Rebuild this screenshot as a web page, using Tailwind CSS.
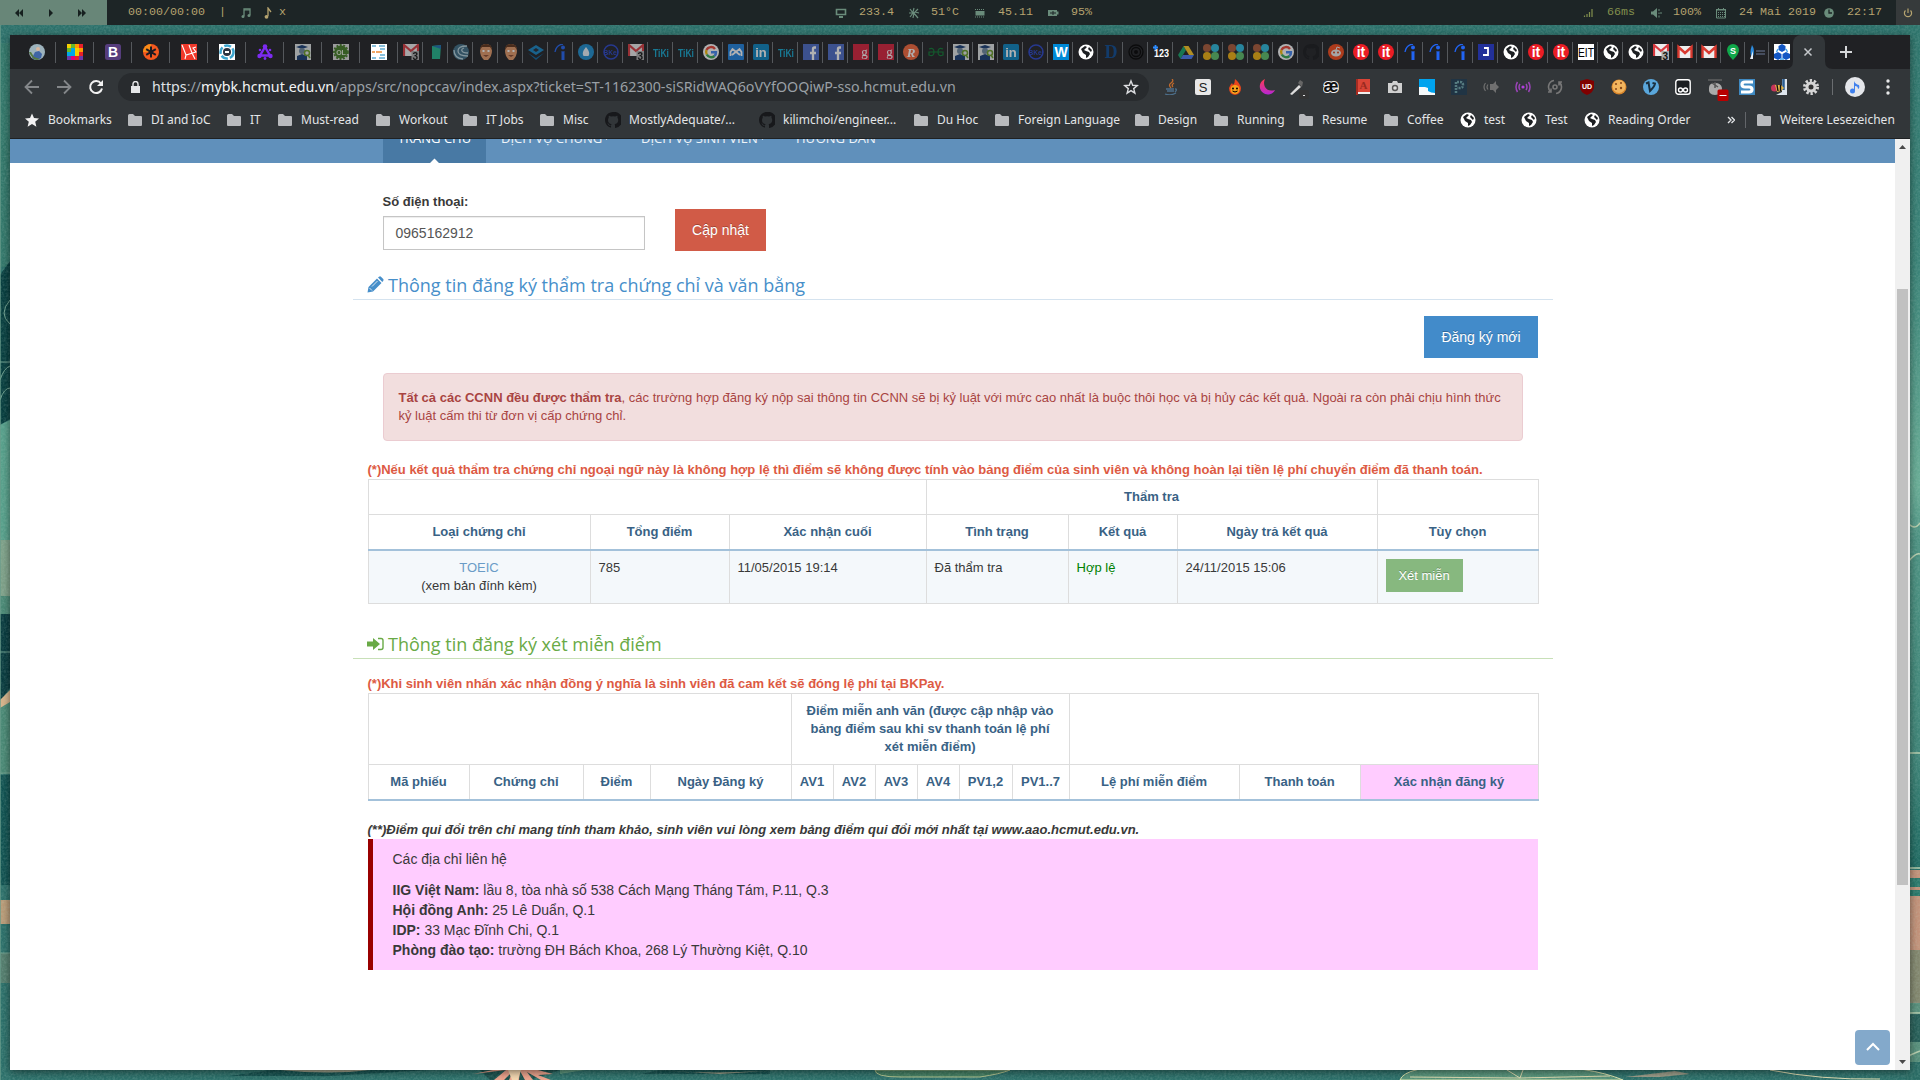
<!DOCTYPE html>
<html lang="vi">
<head>
<meta charset="utf-8">
<title>MyBK</title>
<script src="https://cdn.jsdelivr.net/npm/@tailwindcss/browser@4"></script>
</head>
<body class="relative h-[1080px] w-[1920px] overflow-hidden bg-[#2d716b]">

<!-- Desktop wallpaper -->
<svg class="absolute inset-0" width="1920" height="1080" viewBox="0 0 1920 1080">
  <defs>
    <filter id="grain" x="0" y="0" width="100%" height="100%"><feTurbulence type="fractalNoise" baseFrequency=".45" numOctaves="2" seed="4"/><feColorMatrix values="0 0 0 0 .6  0 0 0 0 .8  0 0 0 0 .72  .9 0 0 0 -.3"/></filter>
    <linearGradient id="wr" x1="0" y1="0" x2="0" y2="1"><stop offset="0" stop-color="#2d736b"/><stop offset=".25" stop-color="#3c8579"/><stop offset=".45" stop-color="#6aae97"/><stop offset=".5" stop-color="#4d9383"/><stop offset=".7" stop-color="#3f8578"/><stop offset=".8" stop-color="#1f6a62"/><stop offset="1" stop-color="#2b6d66"/></linearGradient>
    <linearGradient id="mg" x2="0" y2="1"><stop stop-color="#ff3d4f"/><stop offset="1" stop-color="#b526d6"/></linearGradient>
  </defs>
  <path fill="#2d716b" d="M0 0h1920v1080H0z"/>
  <path fill="url(#wr)" d="M1905 0h15v1080h-15z"/>
  <path fill="#c4937a" d="M1908 870h12v90h-12z"/><path fill="#2b7a6c" d="M1908 878h12v9h-12zM1908 890h12v6h-12z"/>
  <path fill="#84886f" d="M1908 950h12v54h-12z"/><path fill="#58907c" d="M1908 1003h12v10h-12zM1908 1042h12v20h-12z"/><path fill="#275f59" d="M1908 1014h12v28h-12z"/>
  <path fill="none" stroke="#b9cfae" stroke-width="1.500" d="M1908 523q7 8 12 0M1908 562q8-10 12-8M1908 1013h12M1908 1056l12-5M1908 753h12M1908 868h12"/>
  <path fill="#33786b" d="M0 43h10v224H0z"/><path fill="#083f40" d="M0 275l10-14v158l-10 6z"/>
  <path fill="#58a18c" d="M0 425l10-5v120H0z"/><path fill="#80a28a" d="M0 540h10v56H0z"/><path fill="#093c40" d="M0 612h10v76l-10 14z"/>
  <path fill="#4b8a76" d="M0 596h10v18H0zM0 700h10v74H0z"/><path fill="#d8b48b" d="M0 700l10-10v12l-10 6z"/><path fill="#125453" d="M0 775h10v110H0z"/><path fill="#bb9c78" d="M0 900h10v24H0z"/><path fill="#557f6f" d="M0 953h10v30H0z"/>
  <path fill="none" stroke="#6fa18f" d="M10 300q-12 14 0 24M0 362h10M0 380q4-12 10-14M0 400q4-12 10-12M0 652h10M0 773h10M0 953h10"/>
  <path fill="#155250" d="M270 1070h160l-100 6H230zM660 1070h110v4H640z"/>
  <path fill="#9c9d86" d="M280 1070h90q-40 5-90 0zM655 1070q60 5 125 0l-60 4z"/>
  <path fill="#5d977d" d="M560 1070h25l-25 4z"/><path fill="#1a504c" d="M480 1070h80l-30 10h-40z"/>
  <path fill="#efa18a" d="M473 1074l20-4h45l15 4-15 1 13 5h-10l-14-8 6 8h-8l-5-9-1 9h-10l4-9-9 9h-10l12-10z"/><path fill="#f8d8b0" d="M508 1070h13l-3 10h-6z"/>
  <path fill="#427e61" stroke="#b5c58f" d="M875 1070q0 7 25 7h80q20-3 30-7z"/>
  <path fill="#57957b" stroke="#dfe5af" d="M1400 1080q5-14 60-14h70q60 0 93 14z"/><path fill="none" stroke="#e2ddb0" d="M1507 1070l13 8 3-8M1520 1078l-110-1M1520 1078l90-2M1770 1070q50 10 110 9"/><path fill="#9b9a86" d="M1625 1077l50-6 15 3-30 3z"/>
  <path filter="url(#grain)" opacity=".35" d="M0 25h1920v1055H0z"/>
  <path fill="#6b9c8c" opacity=".7" d="M0 25h1v1055H0z"/>
</svg>

<svg class="hidden">
  <symbol id="avatar" viewBox="0 0 16 16"><circle cx="8" cy="8" r="8" fill="#9db3bd"/><path d="M3 14l3-6 4-1 3 3-1 4q-5 3-9 0z" fill="#3f65a5"/><path d="M0 8q3 7 8 8l3-1-6-2-3-5z" fill="#567a3f"/><circle cx="9" cy="5" r="2" fill="#d9b7a0"/></symbol>
  <symbol id="pixels" viewBox="0 0 16 16"><path fill="#f6d000" d="M0 0h16v16H0z"/><path fill="#ff9a00" d="M8 0h4v4H8zM12 4h4v4h-4z"/><path fill="#e8202a" d="M12 0h4v4h-4zM12 8h4v4h-4zM8 12h4v4H8z"/><path fill="#68b82a" d="M0 4h4v4H0zM4 0h4v4H4z"/><path fill="#00a8e8" d="M0 8h8v4H0zM4 4h4v4H4z"/><path fill="#6a3aa8" d="M0 12h4v4H0zM12 12h4v4h-4z"/><path fill="#e2007a" d="M4 12h4v4H4z"/></symbol>
  <symbol id="boot" viewBox="0 0 16 16"><rect width="16" height="16" rx="2.500" fill="#563d7c"/><text x="8" y="13" font-family="Liberation Sans" font-weight="700" font-size="14" text-anchor="middle" fill="#fff">B</text></symbol>
  <symbol id="aster" viewBox="0 0 16 16"><circle cx="8" cy="8" r="8" fill="#f4581f"/><path d="M8 0a8 8 0 0 0-8 8h8z" fill="#f98c18"/><path d="M8 2.500v11M3.200 5.200l9.600 5.600M12.800 5.200l-9.600 5.600" stroke="#1b1b22" stroke-width="2"/></symbol>
  <symbol id="laravel" viewBox="0 0 16 16"><path fill="#f0392b" d="M0 0h16v16H0z"/><path d="M1 1l4 10 10-3-3-4 3-1M4 15l1-4M8 1l3 8 3 6" fill="none" stroke="#fff" stroke-width="1.100"/></symbol>
  <symbol id="ring" viewBox="0 0 16 16"><path fill="#fff" d="M0 0h16v16H0z"/><circle cx="8" cy="8" r="6.500" fill="none" stroke="#3ba5cf" stroke-width="2.500" stroke-dasharray="7 2"/><circle cx="8" cy="8" r="4" fill="#2a3340"/><path d="M6 7h4v2H6z" fill="#fff"/></symbol>
  <symbol id="atom" viewBox="0 0 16 16"><g fill="none" stroke="#7d2bf2" stroke-width="2.400"><path d="M8 3l5 8.500H3z"/></g><g fill="#7d2bf2"><circle cx="8" cy="2.500" r="2.300"/><circle cx="2.500" cy="12" r="2.200"/><circle cx="13.500" cy="12" r="2.200"/><circle cx="3" cy="6" r="1.300"/><circle cx="13" cy="6" r="1.300"/><circle cx="8" cy="14.500" r="1.400"/></g></symbol>
  <symbol id="grad" viewBox="0 0 16 16"><path fill="#e3e8e8" d="M0 0h16v16H0z"/><path d="M1 3l6-2 6 2-6 2z" fill="#163c75"/><circle cx="7" cy="7" r="3" fill="#6e88a0"/><path d="M2 16v-4l5-2 5 2v4z" fill="#163c75"/><circle cx="12" cy="9" r="2.500" fill="none" stroke="#6a9d28" stroke-width="1.500"/><path d="M13 11l2 3" stroke="#6a9d28" stroke-width="1.500"/></symbol>
  <symbol id="ol" viewBox="0 0 16 16"><path fill="#ddd" d="M0 0h16v16H0z"/><circle cx="8" cy="8" r="6.500" fill="#437c24"/><circle cx="8" cy="8" r="7" fill="none" stroke="#437c24" stroke-width="1.800" stroke-dasharray="2 1.500"/><text x="8" y="10.500" font-family="Liberation Sans" font-weight="700" font-size="7" text-anchor="middle" fill="#dfead5">OL</text></symbol>
  <symbol id="list" viewBox="0 0 16 16"><path fill="#fff" d="M0 0h16v16H0z"/><path d="M1 2h4M8 2h6M9 5h5M9 11h5M1 14h4M8 14h6" stroke="#62abd0" stroke-width="1.300"/><path d="M1 8h3M5 8h6" stroke="#f08a35" stroke-width="1.600"/></symbol>
  <symbol id="gmail" viewBox="0 0 16 16"><path fill="#eee" d="M1 2h14v12H1z"/><path d="M1.500 14V3L8 9l6.500-6v11" fill="none" stroke="#d93a30" stroke-width="2.400"/></symbol>
  <symbol id="gmail3" viewBox="0 0 16 16"><path fill="#eee" d="M0 0h16v12H0z"/><path d="M1 12V1l7 6 7-6v6" fill="none" stroke="#d93a40" stroke-width="2.200"/><path fill="#aaa" d="M8.500 7H16v9H8.500z"/><text x="12.300" y="15.500" font-family="Liberation Sans" font-size="10" font-weight="700" text-anchor="middle" fill="#111">3</text></symbol>
  <symbol id="phone" viewBox="0 0 16 16"><path d="M4 2l9-1-1 14H4z" fill="#20b58b"/><path d="M4 2l9-1v4z" fill="#1b6fb0"/></symbol>
  <symbol id="swirl" viewBox="0 0 16 16"><circle cx="8" cy="8" r="8" fill="#3e6d86"/><path d="M14 2Q5 2 5 7t10 5M11 4Q8 5 9 7t6 2M1 6q0 8 9 9" fill="none" stroke="#b7d3dd" stroke-width="1.300"/></symbol>
  <symbol id="face" viewBox="0 0 16 16"><path d="M2 7q0-7 6-7t6 7q0 5-4 9H6Q2 12 2 7z" fill="#e39a68"/><path d="M2 6Q2 0 8 0t6 6l-2-3H4z" fill="#5f3218"/><path d="M4.500 7h2M9.500 7h2" stroke="#fff" stroke-width="2"/><path d="M5 11h6l-3 2z" fill="#8b4a2f"/></symbol>
  <symbol id="cube" viewBox="0 0 16 16"><path d="M8 1l8 5-8 5-8-5z" fill="#1685c4"/><path d="M0 9l8 5 8-5-8 7z" fill="#0b65a0"/><path d="M5 6l3-2 3 2-3 2z" fill="#222a35"/></symbol>
  <symbol id="ind" viewBox="0 0 16 16"><circle cx="10" cy="3.500" r="2" fill="#2164f3"/><path d="M8.500 7q1.500.8 3 0v9h-3z" fill="#2164f3"/><path d="M2 8q1-7 8-8" fill="none" stroke="#2164f3" stroke-width="1.300"/></symbol>
  <symbol id="drop" viewBox="0 0 16 16"><circle cx="8" cy="8" r="8" fill="#1c8fd0"/><path d="M8 3q5 6 2.500 9h-5Q3 9 8 3z" fill="#e9f4fb"/></symbol>
  <symbol id="bkel" viewBox="0 0 16 16"><circle cx="8" cy="8" r="7" fill="none" stroke="#2a45c8" stroke-width="1.500"/><text x="8" y="10.500" font-family="Liberation Sans" font-weight="700" font-size="6.500" text-anchor="middle" fill="#2a45c8">BKel</text></symbol>
  <symbol id="tiki" viewBox="0 0 16 16"><text x="8" y="12.500" font-family="Liberation Sans" font-weight="700" font-size="11" text-anchor="middle" textLength="16" lengthAdjust="spacingAndGlyphs" fill="#14a8d0">TiKi</text></symbol>
  <symbol id="google" viewBox="0 0 16 16"><circle cx="8" cy="8" r="8" fill="#fff"/><g fill="none" stroke-width="2.400"><path d="M12 5a5 5 0 0 0-8.500 1" stroke="#ea4335"/><path d="M3.500 6a5 5 0 0 0 .3 4.500" stroke="#fbbc05"/><path d="M3.800 10.500A5 5 0 0 0 11.500 12" stroke="#34a853"/><path d="M11.500 12A5 5 0 0 0 13 8.200H8" stroke="#4285f4"/></g></symbol>
  <symbol id="wm" viewBox="0 0 16 16"><rect width="16" height="16" rx="1" fill="#1e82e0"/><path d="M2.500 12V8l2-3L12 11M4 11l7.500-6 2 3v4" fill="none" stroke="#fff" stroke-width="1.800"/></symbol>
  <symbol id="in" viewBox="0 0 16 16"><rect width="16" height="16" rx="1.500" fill="#0a84c0"/><text x="8" y="13" font-family="Liberation Sans" font-weight="700" font-size="13" text-anchor="middle" fill="#fff">in</text></symbol>
  <symbol id="fb" viewBox="0 0 16 16"><path fill="#4c6cc8" d="M0 0h16v16H0z"/><path d="M13 3.500h-1.500Q10 3.500 10 5v11M7 9h6" fill="none" stroke="#fff" stroke-width="2.300"/></symbol>
  <symbol id="g" viewBox="0 0 16 16"><path fill="#d8203a" d="M0 0h16v16H0z"/><text x="11.500" y="11.500" font-family="Liberation Serif" font-size="13" text-anchor="middle" fill="#fff">g</text></symbol>
  <symbol id="r" viewBox="0 0 16 16"><circle cx="8" cy="8" r="8" fill="#f8663a"/><text x="8" y="12.500" font-family="Liberation Serif" font-style="italic" font-weight="700" font-size="13" text-anchor="middle" fill="#fff">R</text></symbol>
  <symbol id="gfg" viewBox="0 0 16 16"><path d="M1 5q5-2 5 3t-5 3V8h14v3q-5 2-5-3t5-3" fill="none" stroke="#0c7a32" stroke-width="1.200"/></symbol>
  <symbol id="w" viewBox="0 0 16 16"><path fill="#0089d6" d="M0 0h16v16H0z"/><text x="8" y="13" font-family="Liberation Sans" font-weight="700" font-size="14" text-anchor="middle" fill="#fff">W</text></symbol>
  <symbol id="globe" viewBox="0 0 16 16"><circle cx="8" cy="8" r="7.500" fill="#fff"/><path d="M3 5l4-3 2 1-3 3 2 1 3 1 1 2-2 3-2 1V11L5 9zM11 3l3 3-1 2-3-3z" fill="#1c1f22"/></symbol>
  <symbol id="d" viewBox="0 0 16 16"><text x="8" y="14" font-family="Liberation Serif" font-weight="700" font-size="18" text-anchor="middle" fill="#0c4a92">D</text></symbol>
  <symbol id="tgt" viewBox="0 0 16 16"><g fill="none" stroke="#000" stroke-width="1.300"><circle cx="8" cy="8" r="7"/><circle cx="8" cy="8" r="4.500"/></g><circle cx="8" cy="8" r="2"/></symbol>
  <symbol id="n123" viewBox="0 0 16 16"><text x="8.500" y="12.500" font-family="Liberation Sans" font-weight="700" font-size="10.500" text-anchor="middle" textLength="15" lengthAdjust="spacingAndGlyphs" fill="#fff">123</text><path d="M2.500 1v5M0 3.500h5" stroke="#2d8cff" stroke-width="1.800"/></symbol>
  <symbol id="drive" viewBox="0 0 16 16"><path fill="#15a56a" d="M5.500 2L0 11l2.500 4L8 6z"/><path fill="#ffc922" d="M5.500 2h5l5.500 9h-5z"/><path fill="#487bf0" d="M5 11h11l-2.500 4h-11z"/></symbol>
  <symbol id="dots" viewBox="0 0 16 16"><circle cx="4" cy="4" r="4" fill="#7b4631"/><circle cx="12" cy="4" r="4" fill="#27859d"/><circle cx="4" cy="12" r="4" fill="#a97f15"/><circle cx="12" cy="12" r="4" fill="#478751"/></symbol>
  <symbol id="github" viewBox="0 0 16 16"><path d="M8 0C3.580 0 0 3.580 0 8c0 3.540 2.290 6.530 5.470 7.590.4.070.55-.17.55-.38v-1.500c-2 .4-2.600-.9-2.800-1.300-.3-.6-.9-1-1-1.100.9 0 1.400.6 1.700 1 .7 1.200 1.800.9 2.200.7.100-.5.300-.9.500-1.100-1.800-.2-3.600-.9-3.600-4 0-.9.300-1.600.8-2.100-.1-.2-.4-1 .1-2.100 0 0 .7-.2 2.200.8a7.500 7.500 0 0 1 4 0c1.500-1 2.200-.8 2.200-.8.400 1.100.2 1.900.1 2.100.5.600.8 1.300.8 2.100 0 3.100-1.900 3.800-3.700 4 .3.300.5.800.5 1.500v2.200c0 .2.100.5.500.4A8 8 0 0 0 8 0z" fill="#17181b"/></symbol>
  <symbol id="reddit" viewBox="0 0 16 16"><circle cx="8" cy="8" r="8" fill="#f94a18"/><ellipse cx="8" cy="9" rx="5" ry="3.500" fill="#eee"/><circle cx="6" cy="8.500" r="1" fill="#d93f12"/><circle cx="10" cy="8.500" r="1" fill="#d93f12"/><path d="M8 6l1-3 3 1" fill="none" stroke="#eee"/></symbol>
  <symbol id="it" viewBox="0 0 16 16"><circle cx="8" cy="8" r="8" fill="#ea1c24"/><text x="8" y="13" font-family="Liberation Sans" font-weight="700" font-size="14" text-anchor="middle" fill="#fff">it</text></symbol>
  <symbol id="j" viewBox="0 0 16 16"><path fill="#223099" d="M0 0h16v16H0z"/><path d="M6 4h4v7H5" fill="none" stroke="#fff" stroke-width="1.800"/></symbol>
  <symbol id="eit" viewBox="0 0 16 16"><path fill="#fff" d="M0 0h16v16H0z"/><text x="8" y="12.500" font-family="Liberation Sans" font-size="12" text-anchor="middle" textLength="16" lengthAdjust="spacingAndGlyphs" fill="#000">EIT</text></symbol>
  <symbol id="spin" viewBox="0 0 16 16"><path d="M8 16Q2 10 2 6a6 6 0 0 1 12 0q0 4-6 10z" fill="#10a84a"/><text x="8" y="9.500" font-family="Liberation Sans" font-weight="700" font-size="9" text-anchor="middle" fill="#fff">S</text></symbol>
  <symbol id="ship" viewBox="0 0 16 16"><path d="M3 1q4 6 0 13-3-5 0-13z" fill="#2d8de0"/><path d="M4 7v8H1z" fill="#e9eef5"/><path d="M7 7h9M7 10h9" stroke="#454d5e" stroke-width="2"/></symbol>
  <symbol id="bk" viewBox="0 0 16 16"><path fill="#fff" d="M0 0h16v16H0z"/><path d="M8 0l3.500 2v4L8 8 4.500 6V2zM4 8l3.500 2v4L4 16l-4-2v-4z" fill="#1256c4"/><path d="M12 8l4 2v4l-4 2-3.500-2v-4z" fill="#1256c4"/><path d="M4 5L2.500 8M12 5l1.500 3M6 15h4" stroke="#43a5ee" stroke-width="1.500"/></symbol>

  <symbol id="e-java" viewBox="0 0 16 16"><path d="M8 9Q5 6 8 4t1-4M10 8q-2-2 1-4" fill="none" stroke="#c06a2c" stroke-width="1.300"/><path d="M3 10h8M4 12h7M2 15q6 2 11-1M12 10q3 0 0 3" fill="none" stroke="#4d6f8b" stroke-width="1.300"/></symbol>
  <symbol id="e-s" viewBox="0 0 16 16"><rect width="16" height="16" rx="2" fill="#e8e8e8"/><text x="8" y="12.500" font-family="Liberation Sans" font-size="13" text-anchor="middle" fill="#222">S</text></symbol>
  <symbol id="e-fire" viewBox="0 0 16 16"><path d="M8 0q5 4 6 9 0 6-6 7-6-1-6-7 1-3 3-5l1 2q2-2 2-6z" fill="#e8461c"/><circle cx="8" cy="10.500" r="4.500" fill="#f8a21c"/><circle cx="6" cy="9.500" r="1"/><circle cx="10" cy="9.500" r="1"/><path d="M5.500 12q2.500 2 5 0" fill="none" stroke="#000"/></symbol>
  <symbol id="e-moon" viewBox="0 0 16 16"><path d="M6 0a8 8 0 1 0 10 11Q9 13 6 8 4 4 6 0z" fill="url(#mg)"/></symbol>
  <symbol id="e-pick" viewBox="0 0 20 20"><path d="M1 15l9-9 2 2-9 8z" fill="#ddd"/><path d="M9 4l2-3 3 2-1 5z" fill="#666"/><rect x="10" y="11" width="10" height="9" rx="2" fill="#333"/><path d="M14 16h2v1h-2z" fill="#ddd"/></symbol>
  <symbol id="e-ae" viewBox="0 0 16 16"><text x="8" y="13" font-family="Liberation Sans" font-weight="700" font-size="18" text-anchor="middle" textLength="15" lengthAdjust="spacingAndGlyphs" fill="#111" stroke="#eee" stroke-width="2" paint-order="stroke">æ</text></symbol>
  <symbol id="e-dict" viewBox="0 0 16 16"><path fill="#d94436" d="M2 0h13v13H2z"/><path fill="#eee" d="M3 13h12v2H3z"/><path fill="#a52c22" d="M1 0h2v16H1z"/><text x="8.500" y="10" font-family="Liberation Serif" font-weight="700" font-size="11" text-anchor="middle" fill="#992a20">A</text></symbol>
  <symbol id="e-cam" viewBox="0 0 16 16"><path d="M1 4h4l1-2h4l1 2h4v10H1z" fill="#d0d0d0"/><circle cx="8" cy="9" r="3.200" fill="#555"/><circle cx="8" cy="9" r="1.800" fill="#ddd"/></symbol>
  <symbol id="e-blue" viewBox="0 0 16 16"><path fill="#00a3ee" d="M0 0h16v16H0z"/><path fill="#f5f9fb" d="M0 8h6l3 1v3q3 2 7 2v2H0z"/></symbol>
  <symbol id="e-p" viewBox="0 0 16 16"><path fill="#203444" d="M0 0h16v16H0z"/><path d="M5 14V3h4q3 0 3 3t-3 3H6" fill="none" stroke="#567b80" stroke-width="2.500" stroke-dasharray="2 1"/></symbol>
  <symbol id="e-spk" viewBox="0 0 16 16"><path d="M7 5h3l3-3v12l-3-3H7zM13 5l3 3-3 3z" fill="#707070"/><path d="M2.500 4q-3 4 0 8M5 5.500q-2 2.500 0 5" fill="none" stroke="#707070" stroke-width="1.200"/></symbol>
  <symbol id="e-pod" viewBox="0 0 16 16"><circle cx="8" cy="8" r="1.600" fill="#b33fe0"/><g fill="none" stroke="#9b44b8" stroke-width="1.500"><path d="M5 5q-2 3 0 6M11 5q2 3 0 6M2.500 3q-3 5 0 10M13.500 3q3 5 0 10"/></g></symbol>
  <symbol id="e-rec" viewBox="0 0 16 16"><g fill="none" stroke="#777" stroke-width="1.600"><path d="M4 13A6.500 6.500 0 0 1 7 1.500M1 13h3V9.500M12 3A6.500 6.500 0 0 1 9 14.500M15 3h-3v3.500"/><circle cx="8" cy="8" r="2"/></g></symbol>
  <symbol id="e-ub" viewBox="0 0 16 16"><path d="M8 0l7 2v6q0 5-7 8-7-3-7-8V2z" fill="#800000"/><text x="8" y="10" font-family="Liberation Sans" font-weight="700" font-size="7" text-anchor="middle" fill="#fff">UD</text></symbol>
  <symbol id="e-cook" viewBox="0 0 16 16"><circle cx="8" cy="8" r="7.500" fill="#d9862c"/><circle cx="8" cy="7.500" r="6.500" fill="#f2b55e"/><g fill="#8a4a1a"><circle cx="5" cy="5" r="1.100"/><circle cx="10" cy="4" r="1"/><circle cx="10" cy="9" r="1.200"/><circle cx="5" cy="10" r="1"/></g></symbol>
  <symbol id="e-v" viewBox="0 0 16 16"><circle cx="8" cy="8" r="8" fill="#5aa7dc"/><path d="M3 4.500l2.500-1L7 12q5-5 5-7.500L9.500 4" fill="none" stroke="#1a3040" stroke-width="2"/></symbol>
  <symbol id="e-gog" viewBox="0 0 16 16"><rect x=".8" y=".8" width="14.400" height="14.400" rx="2.500" fill="#1b1e21" stroke="#fff" stroke-width="1.400"/><g fill="none" stroke="#fff" stroke-width="1.400"><circle cx="5.500" cy="11" r="2"/><circle cx="10.500" cy="11" r="2"/></g></symbol>
  <symbol id="e-bad" viewBox="0 0 22 22"><path d="M2 9q0-5 6-5t7 5q0 7-7 7t-6-7z" fill="#aaa"/><path d="M8 3v6M5 4l6 4" stroke="#555" stroke-width="1.500"/><path d="M1 1h14" stroke="#777"/><rect x="10.500" y="10.500" width="11" height="11.500" rx="1.500" fill="#b80000"/><path d="M12.500 16.500h7" stroke="#fff"/></symbol>
  <symbol id="e-sb" viewBox="0 0 16 16"><path fill="#3f8ac2" d="M0 0h16v16H0z"/><path d="M14 3H6Q3 3 3 5.500T6 8h4q3 0 3 2.500T10 13H2" fill="none" stroke="#fff" stroke-width="3.200"/></symbol>
  <symbol id="e-fish" viewBox="0 0 16 16"><path d="M11 0h5v16H5l6-3z" fill="#dfe6ee"/><path d="M12.500 0v11" stroke="#2a5c90" stroke-width="2.500"/><circle cx="3.500" cy="9" r="3.500" fill="#c6355a"/><path d="M4 6h6l3 3-3 3-4 1z" fill="#e7b84a"/><path d="M6 6l1 6M9.500 6v6" stroke="#111" stroke-width="1.400"/></symbol>
  <symbol id="e-gear" viewBox="0 0 16 16"><circle cx="8" cy="8" r="6.500" fill="none" stroke="#d5d5d5" stroke-width="3" stroke-dasharray="2.300 1.780"/><circle cx="8" cy="8" r="4" fill="#333" stroke="#d5d5d5" stroke-width="3"/></symbol>

  <symbol id="folder" viewBox="0 0 16 16"><path d="M1 3.500Q1 2 2.500 2H6l2 2h6q1 0 1 1v8q0 1-1 1H2q-1 0-1-1z" fill="#b8babd"/></symbol>
  <symbol id="star" viewBox="0 0 16 16"><path d="M8 1.500l2 4.600 5 .4-3.800 3.300 1.200 4.900L8 12.100l-4.400 2.600 1.200-4.900L1 6.500l5-.4z" fill="#f3f3f3"/></symbol>

  <symbol id="t-notes" viewBox="0 0 12 12"><path d="M4 9V2h6v6" fill="none" stroke="currentColor" stroke-width="1.300"/><path d="M4 3h6" stroke="currentColor"/><circle cx="3" cy="9.500" r="1.500" fill="currentColor"/><circle cx="9" cy="8.500" r="1.500" fill="currentColor"/></symbol>
  <symbol id="t-note" viewBox="0 0 12 12"><path d="M6 9V1l3 4" fill="none" stroke="currentColor" stroke-width="1.300"/><circle cx="4.500" cy="9.800" r="1.900" fill="currentColor"/></symbol>
  <symbol id="t-mon" viewBox="0 0 12 12"><path d="M1.500 2.500h9v5h-9z" fill="none" stroke="currentColor" stroke-width="1.600"/><path d="M4 9h4v2H4z" fill="currentColor"/></symbol>
  <symbol id="t-fan" viewBox="0 0 12 12"><path d="M2 2l3 4-3 4M6 1L5 5l5 6M10 2L6 6l-1 5M1 6h4M7 5l4 1" fill="none" stroke="currentColor" stroke-width="1.200"/></symbol>
  <symbol id="t-ram" viewBox="0 0 12 12"><path d="M1.500 4h9v4.500h-9z" fill="currentColor"/><path d="M1 2.500h10M1 10h10" stroke="currentColor" stroke-dasharray="1 1"/></symbol>
  <symbol id="t-bat" viewBox="0 0 12 12"><path d="M1 3h9v1.500h1.500v3H10V9H1z" fill="currentColor"/><path d="M3 6h6M6 4v4" stroke="#1d2526"/></symbol>
  <symbol id="t-sig" viewBox="0 0 12 12"><path d="M2.500 10V8.500M5 10V7M7.500 10V5M10 10V2" stroke="currentColor" stroke-width="1.200"/></symbol>
  <symbol id="t-vol" viewBox="0 0 12 12"><path d="M1 4.500h2L7 1v10L3 7.500H1z" fill="currentColor"/><path d="M9 2v2M9 5.500v1.500M9 8.500v2M11 5v2" stroke="currentColor"/></symbol>
  <symbol id="t-cal" viewBox="0 0 12 12"><path d="M1.500 3h9v8h-9z" fill="none" stroke="currentColor"/><path d="M3 5.500h7M3 7.500h7M3 9.500h7" stroke="currentColor" stroke-dasharray="1 1"/><path d="M1 2.500h10M3.500 1v2M8.500 1v2" stroke="currentColor"/></symbol>
  <symbol id="t-clk" viewBox="0 0 12 12"><circle cx="6" cy="6" r="4.800" fill="currentColor"/><path d="M6 2.500V6h3" fill="none" stroke="#1d2526" stroke-width="1.300"/></symbol>
</svg>

<div class="relative flex h-full flex-col">
  <!-- Status bar -->
  <header class="flex h-[25px] shrink-0 items-stretch bg-[#1d2526] font-['Liberation_Mono',monospace] text-[11.67px] text-[#b5a36f]">
    <div class="flex w-[107px] items-center bg-[#688678] pl-[13px] text-[#16201f]">
      <svg class="mr-[20px] size-3" viewBox="0 0 12 12"><path d="M6 2v8L2 6zM10 2v8L6 6z" fill="currentColor"/></svg>
      <svg class="mr-[19px] size-3" viewBox="0 0 12 12"><path d="M4 2l4 4-4 4z" fill="currentColor"/></svg>
      <svg class="size-3" viewBox="0 0 12 12"><path d="M2 2l4 4-4 4zM6 2l4 4-4 4z" fill="currentColor"/></svg>
    </div>
    <div id="status" class="flex flex-1 items-center whitespace-pre pl-[21px]"></div>
    <div class="flex w-6 items-center justify-center bg-[#363a3b]">
      <svg class="size-3" viewBox="0 0 12 12"><path d="M3.500 3.500a3.600 3.600 0 1 0 5 0M6 1.500V6" fill="none" stroke="currentColor" stroke-width="1.200"/></svg>
    </div>
  </header>

  <!-- Browser window -->
  <div class="mx-[10px] mt-[10px] flex h-[1035px] flex-col bg-white shadow-[0_2px_8px_rgba(0,0,0,.5)]">
    <div class="flex h-[34px] shrink-0 items-center bg-[#202124] pl-2">
      <div id="tabs" class="flex items-center"></div>
      <div class="relative h-full w-8 rounded-t-lg bg-[#323639]">
        <svg class="absolute bottom-0 -left-2 size-2" viewBox="0 0 8 8"><path d="M8 0v8H0q8 0 8-8z" fill="#323639"/></svg>
        <svg class="absolute -right-2 bottom-0 size-2" viewBox="0 0 8 8"><path d="M0 0v8h8Q0 8 0 0z" fill="#323639"/></svg>
        <svg class="mt-[11px] ml-[9px] size-3" viewBox="0 0 12 12"><path d="M2.500 2.500l7 7M9.500 2.500l-7 7" stroke="#c5c8cb" stroke-width="1.500"/></svg>
      </div>
      <svg class="ml-3.5 size-3.5" viewBox="0 0 14 14"><path d="M7 1v12M1 7h12" stroke="#d5d7d9" stroke-width="2"/></svg>
    </div>

    <div class="flex h-9 shrink-0 items-center bg-[#323639] pl-3.5">
      <svg class="mr-4 size-4" viewBox="0 0 16 16"><path d="M15 8H2M8 1.500L1.500 8 8 14.500" fill="none" stroke="#84878a" stroke-width="1.800"/></svg>
      <svg class="mr-4 size-4" viewBox="0 0 16 16"><path d="M1 8h13M8 1.500L14.500 8 8 14.500" fill="none" stroke="#84878a" stroke-width="1.800"/></svg>
      <svg class="mr-[14px] size-4" viewBox="0 0 16 16"><path d="M13 4.500A6 6 0 1 0 14 9.500" fill="none" stroke="#f1f1f1" stroke-width="2"/><path d="M15 1v6H9z" fill="#f1f1f1"/></svg>
      <div class="flex h-7 w-[1031px] items-center rounded-full bg-[#282b2e] pl-[13px] font-['Noto_Sans',sans-serif] text-[14.25px] text-[#9aa0a6]">
        <svg class="mr-3 h-3 w-[9px] shrink-0" viewBox="0 0 9 12"><path d="M0 5h9v7H0z" fill="#e5e6e8"/><path d="M2 5V3a2.500 2.500 0 0 1 5 0v2" fill="none" stroke="#e5e6e8" stroke-width="1.400"/></svg>
        <span class="w-[804px] whitespace-nowrap"><span class="text-[#dfe1e5]">https</span>://<span class="text-[#f1f3f4]">mybk.hcmut.edu.vn</span>/apps/src/nopccav/index.aspx?ticket=ST-1162300-siSRidWAQ6oVYfOOQiwP-sso.hcmut.edu.vn</span>
        <svg class="ml-[167px] size-4 shrink-0" viewBox="0 0 16 16"><path d="M8 2l1.700 4.300 4.600.3-3.600 3 1.200 4.500L8 11.600l-3.900 2.500 1.200-4.500-3.600-3 4.600-.3z" fill="none" stroke="#dcdde0" stroke-width="1.400"/></svg>
      </div>
      <div id="ext" class="ml-[6px] flex items-center"></div>
      <div class="ml-[5px] h-4 w-px bg-[#6a6d70]"></div>
      <svg class="ml-3 size-5" viewBox="0 0 20 20"><circle cx="10" cy="10" r="10" fill="#e4e6ea"/><path d="M9 14V4q1 3 5 4 1 3-1 4 0-3-3-3v5" fill="#3f80ee"/><circle cx="7.500" cy="14" r="2.500" fill="#3f80ee"/></svg>
      <svg class="ml-[21px] h-4 w-1" viewBox="0 0 4 16"><g fill="#e8e9ea"><circle cx="2" cy="2" r="1.700"/><circle cx="2" cy="8" r="1.700"/><circle cx="2" cy="14" r="1.700"/></g></svg>
    </div>

    <div class="flex h-[34px] shrink-0 items-center border-b border-[#1f2123] bg-[#323639] pl-[14px] pb-1 font-['Noto_Sans',sans-serif] text-xs text-[#e3e5e7]">
      <div id="bookmarks" class="flex items-center"></div>
      <svg class="ml-px size-2" viewBox="0 0 8 8"><path d="M1 1l3 3-3 3M4.500 1l3 3-3 3" fill="none" stroke="#e3e5e7" stroke-width="1.400"/></svg>
      <div class="ml-[10px] h-4 w-px bg-[#63666a]"></div>
      <svg class="ml-[10px] size-4"><use href="#folder"/></svg>
      <span class="ml-2 whitespace-nowrap">Weitere Lesezeichen</span>
    </div>

    <!-- Page -->
    <div class="flex min-h-0 flex-1">
      <main class="relative flex flex-1 flex-col overflow-hidden font-['Liberation_Sans',sans-serif] text-[13px] leading-[18px] text-[#393939]">
        <nav class="flex h-6 shrink-0 items-start overflow-hidden bg-[#6090bb] pl-[373px] font-['Open_Sans',sans-serif] text-[13px] leading-[18px] whitespace-nowrap text-white/90">
          <div class="relative h-6 w-[103px] bg-[#4879a4] text-center text-white"><div class="-mt-[10px]">TRANG CHỦ</div><div class="absolute -bottom-1 left-[48px] size-[7px] rotate-45 bg-white"></div></div>
          <div class="-mt-[10px] ml-[15px] flex w-[140px] items-center gap-0.5">DỊCH VỤ CHUNG<svg class="h-[3px] w-[5px]" viewBox="0 0 5 3"><path d="M0 0h5L2.500 3z" fill="currentColor"/></svg></div>
          <div class="-mt-[10px] flex w-[155px] items-center gap-0.5">DỊCH VỤ SINH VIÊN<svg class="h-[3px] w-[5px]" viewBox="0 0 5 3"><path d="M0 0h5L2.500 3z" fill="currentColor"/></svg></div>
          <div class="-mt-[10px]">HƯỚNG DẪN</div>
        </nav>

        <section class="ml-[342.5px] w-[1200px]">
          <div class="flex pt-[30px] pl-[30px]">
            <div>
              <label class="block font-bold">Số điện thoại:</label>
              <div class="mt-[5px] flex h-[34px] w-[262px] items-center border border-[#c5c5c5] px-3 text-sm text-[#555] shadow-[inset_0_1px_1px_rgba(0,0,0,.075)]">0965162912</div>
            </div>
            <button class="mt-4 ml-[30px] h-[42px] w-[91px] bg-[#d15b47] pl-px text-sm text-white [text-shadow:0_-1px_0_rgba(0,0,0,.25)]">Cập nhật</button>
          </div>

          <h3 class="mt-[21px] flex h-[28px] items-center border-b border-[#d5e3ef] pb-0.5 pl-[14px] font-['Open_Sans',sans-serif] text-lg text-[#478fca]">
            <svg class="mr-[4.5px] size-[17px]" viewBox="0 0 17 17"><path d="M.5 16.500l1-5.500L10 2.500 14.500 7 6 15.500zM11 1.600l1-.9q1.200-.8 2.200.2l1.800 1.800q1 1 .2 2.200l-.9 1.200z" fill="currentColor"/><path d="M2.500 12l2.500 2.500M5 10.500l5.500-5.500" stroke="#fff" stroke-width=".8"/></svg>
            <span>Thông tin đăng ký thẩm tra chứng chỉ và văn bằng</span>
          </h3>

          <div class="flex justify-end pt-4 pr-[15px]">
            <button class="h-[42px] w-[114px] bg-[#428bca] pl-px text-sm text-white [text-shadow:0_-1px_0_rgba(0,0,0,.25)]">Đăng ký mới</button>
          </div>

          <div class="mt-[15px] ml-[30px] h-[68px] w-[1140px] rounded border border-[#ebccd1] bg-[#f2dede] px-[15px] pt-[15px] text-[#a94442]"><b>Tất cả các CCNN đều được thẩm tra</b>, các trường hợp đăng ký nộp sai thông tin CCNN sẽ bị kỷ luật với mức cao nhất là buộc thôi học và bị hủy các kết quả. Ngoài ra còn phải chịu hình thức kỷ luật cấm thi từ đơn vị cấp chứng chỉ.</div>

          <div class="mt-5 ml-[15px] w-[1170px]">
            <p class="font-bold text-[#dd5a43]">(*)Nếu kết quả thẩm tra chứng chỉ ngoại ngữ này là không hợp lệ thì điểm sẽ không được tính vào bảng điểm của sinh viên và không hoàn lại tiền lệ phí chuyển điểm đã thanh toán.</p>
            <table class="w-[1170px] table-fixed border-collapse text-[13px] leading-[18px] [&_td]:border-x [&_td]:border-[#ddd] [&_td]:px-2 [&_td]:pt-2 [&_td]:align-top [&_th]:border [&_th]:border-[#ddd] [&_th]:text-[#396285]">
              <colgroup><col class="w-[222px]"><col class="w-[139px]"><col class="w-[197px]"><col class="w-[142px]"><col class="w-[109px]"><col class="w-[200px]"><col class="w-[161px]"></colgroup>
              <tr class="h-[35px]"><th colspan="3"></th><th colspan="3">Thẩm tra</th><th></th></tr>
              <tr class="h-[35px] border-b-2 border-[#a3c1da]"><th>Loại chứng chỉ</th><th>Tổng điểm</th><th>Xác nhận cuối</th><th>Tình trạng</th><th>Kết quả</th><th>Ngày trả kết quả</th><th>Tùy chọn</th></tr>
              <tr class="h-[54px] border-b border-[#ddd] bg-[#f4f8fb]"><td class="text-center"><span class="text-[#6a9cc7]">TOEIC</span><br>(xem bản đính kèm)</td><td>785</td><td>11/05/2015 19:14</td><td>Đã thẩm tra</td><td class="text-[#008000]">Hợp lệ</td><td>24/11/2015 15:06</td><td><button class="block h-[33px] w-[77px] bg-[#87b87f] pt-px text-white [text-shadow:0_-1px_0_rgba(0,0,0,.25)]">Xét miễn</button></td></tr>
            </table>
          </div>

          <h3 class="mt-[27px] flex h-[28px] items-center border-b border-[#c8e0b8] pb-0.5 pl-[14px] font-['Open_Sans',sans-serif] text-lg text-[#69aa46]">
            <svg class="mr-[4.5px] h-[14px] w-[17px]" viewBox="0 0 17 14"><path d="M0 4.500h6V1l7 6-7 6V9.500H0z" fill="currentColor"/><path d="M11 1.500h3q2 0 2 2v7q0 2-2 2h-3" fill="none" stroke="currentColor" stroke-width="1.400"/></svg>
            <span>Thông tin đăng ký xét miễn điểm</span>
          </h3>

          <div class="mt-4 ml-[15px] w-[1170px]">
            <p class="font-bold text-[#dd5a43]">(*)Khi sinh viên nhấn xác nhận đồng ý nghĩa là sinh viên đã cam kết sẽ đóng lệ phí tại BKPay.</p>
            <table class="w-[1170px] table-fixed border-collapse text-[13px] leading-[18px] [&_th]:border [&_th]:border-[#ddd] [&_th]:text-[#396285]">
              <colgroup><col class="w-[101px]"><col class="w-[114px]"><col class="w-[67px]"><col class="w-[141px]"><col class="w-[42px]"><col class="w-[42px]"><col class="w-[42px]"><col class="w-[42px]"><col class="w-[53px]"><col class="w-[57px]"><col class="w-[170px]"><col class="w-[121px]"><col class="w-[178px]"></colgroup>
              <tr class="h-[71px]"><th colspan="4"></th><th colspan="6" class="px-2">Điểm miễn anh văn (được cập nhập vào bảng điểm sau khi sv thanh toán lệ phí xét miễn điểm)</th><th colspan="3"></th></tr>
              <tr class="h-[35px] border-b-2 border-[#a3c1da]"><th>Mã phiếu</th><th>Chứng chỉ</th><th>Điểm</th><th>Ngày Đăng ký</th><th>AV1</th><th>AV2</th><th>AV3</th><th>AV4</th><th>PV1,2</th><th>PV1..7</th><th>Lệ phí miễn điểm</th><th>Thanh toán</th><th class="bg-[#fcf]">Xác nhận đăng ký</th></tr>
            </table>
            <p class="mt-5 font-bold italic">(**)Điểm qui đổi trên chỉ mang tính tham khảo, sinh viên vui lòng xem bảng điểm qui đổi mới nhất tại www.aao.hcmut.edu.vn.</p>
            <div class="h-[131px] border-l-[5px] border-[#900] bg-[#fcf] pt-[10px] pl-5 text-sm leading-5">
              <p class="mb-[11px]">Các địa chỉ liên hệ</p>
              <p><b>IIG Việt Nam:</b> lầu 8, tòa nhà số 538 Cách Mạng Tháng Tám, P.11, Q.3</p>
              <p><b>Hội đồng Anh:</b> 25 Lê Duẩn, Q.1</p>
              <p><b>IDP:</b> 33 Mạc Đĩnh Chi, Q.1</p>
              <p><b>Phòng đào tạo:</b> trường ĐH Bách Khoa, 268 Lý Thường Kiệt, Q.10</p>
            </div>
          </div>
        </section>

        <button class="absolute right-[5px] bottom-[5px] flex size-[35px] items-center justify-center rounded-sm bg-[#83a9cb]">
          <svg class="-mt-0.5 h-[9px] w-[14px]" viewBox="0 0 14 9"><path d="M1 8l6-6 6 6" fill="none" stroke="#fff" stroke-width="2"/></svg>
        </button>
      </main>
      <div class="flex w-[15px] flex-col items-center bg-[#f0f0f0]">
        <svg class="mt-[6px] h-1 w-[7px]" viewBox="0 0 7 4"><path d="M0 4l3.500-4L7 4z" fill="#4a4a4a"/></svg>
        <div class="mt-[140px] h-[596px] w-[11px] bg-[#c1c1c1]"></div>
        <svg class="mt-auto mb-[6px] h-1 w-[7px]" viewBox="0 0 7 4"><path d="M0 0l3.500 4L7 0z" fill="#4a4a4a"/></svg>
      </div>
    </div>
  </div>
</div>

<script>
const icon = (id, cls) => `<svg class="${cls}"><use href="#${id}"/></svg>`;

// A trailing "~" marks a suspended tab, drawn dimmed.
const wide = 'avatar pixels boot aster laravel ring atom grad~ ol~ list'.split(' ');
const mid = ('gmail3~ phone~ swirl~ face~ face~ cube~ ind~ drop~ bkel~ gmail3~ tiki~ tiki~ google~ wm~ in~ tiki~ fb~ fb~ g~ g~ r~ gfg~ grad~ grad~ in~ bkel~ w globe d~ tgt~ n123 drive~ dots dots dots google~ github~ reddit~ it it ind ind ind j globe it it eit globe globe gmail3').split(' ');
const narrow = 'gmail gmail spin ship bk'.split(' ');
const tab = w => n => `<div class="flex h-[21px] shrink-0 items-center justify-center pl-px ${n === 'bk' ? '' : 'border-r border-[#55585c]'}" style="width:${w}px">${icon(n.replace('~', ''), n.endsWith('~') ? 'size-4 opacity-65' : 'size-4')}</div>`;
document.getElementById('tabs').innerHTML = wide.map(tab(38)).join('') + mid.map(tab(25)).join('') + narrow.map(tab(24)).join('');

document.getElementById('ext').innerHTML = 'java s fire moon pick ae dict cam blue p spk pod rec ub cook v gog bad sb fish gear'.split(' ').map(n =>
  `<div class="flex w-8 justify-center">${icon('e-' + n, n === 'bad' ? 'size-[22px] -mr-1.5 mt-1.5 shrink-0' : n === 'pick' ? 'size-5 mt-1 shrink-0' : 'size-4')}</div>`).join('');

// [icon, label, left edge]
const marks = [['star','Bookmarks',24],['folder','DI and IoC',127],['folder','IT',226],['folder','Must-read',277],['folder','Workout',375],['folder','IT Jobs',462],['folder','Misc',539],['github','MostlyAdequate/...',605],['github','kilimchoi/engineer...',759],['folder','Du Hoc',913],['folder','Foreign Language',994],['folder','Design',1134],['folder','Running',1213],['folder','Resume',1298],['folder','Coffee',1383],['globe','test',1460],['globe','Test',1521],['globe','Reading Order',1584],['','',1726]];
document.getElementById('bookmarks').innerHTML = marks.slice(0, -1).map(([ic, t, x], i) =>
  `<div class="flex shrink-0 items-center gap-2 whitespace-nowrap" style="width:${marks[i + 1][2] - x}px">${icon(ic, 'size-4 shrink-0')}<span>${t}</span></div>`).join('');

const stat = [['','00:00/00:00',128],['','|',219],['t-notes','',240],['t-note','',262],['','x',279],['t-mon','',835],['','233.4',859],['t-fan','',908],['','51°C',931],['t-ram','',974],['','45.11',998],['t-bat','',1047],['','95%',1071],['t-sig','',1582],['','66ms',1607],['t-vol','',1650],['','100%',1673],['t-cal','',1715],['','24 Mai 2019',1739],['t-clk','',1823],['','22:17',1847],['','',1896]];
document.getElementById('status').innerHTML = stat.slice(0, -1).map(([ic, t, x], i) =>
  `<div class="shrink-0 ${ic === 't-note' ? '' : ic === 't-sig' || t === '66ms' ? 'text-[#82904d]' : ic ? 'text-[#6a8c7b]' : ''}" style="width:${stat[i + 1][2] - x}px">${ic ? icon(ic, 'size-3') : t}</div>`).join('');
</script>
</body>
</html>
